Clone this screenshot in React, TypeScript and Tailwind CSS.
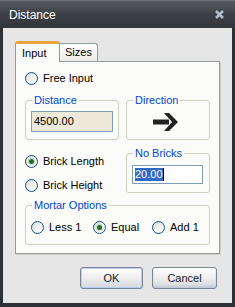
import React from "react";

function Radio({ checked, label }: { checked?: boolean; label: string }) {
    return (
        <label className="flex items-center gap-[5px] h-[13px]">
            <span className="w-[13px] h-[13px] shrink-0 rounded-full border border-[#1c5180] bg-gradient-to-br from-[#d8d8d2] via-[#f2f2ef] to-white flex items-center justify-center">
                {checked && <span className="w-[5px] h-[5px] rounded-full bg-[#22722a] shadow-[0_0_0_1px_#c3dcc3]" />}
            </span>
            <span className="leading-[13px]">{label}</span>
        </label>
    );
}

function Group({ title, className, children }: { title: string; className?: string; children?: React.ReactNode }) {
    return (
        <div className={"relative border border-[#d0d0bf] rounded-[3px] " + (className ?? "")}>
            <span className="absolute -top-[8px] left-[6px] px-[2px] bg-[#fbfbf9] text-[#0046d5] leading-[14px] whitespace-nowrap">
                {title}
            </span>
            {children}
        </div>
    );
}

export default function App() {
    return (
        <div className="w-[235px] h-[307px] flex flex-col bg-[#2e3136] font-['Liberation_Sans',Arial,sans-serif] text-[11px] text-black select-none">
            {/* Title bar */}
            <div className="h-[28px] shrink-0 flex items-center justify-between pl-[9px] pr-[11px] bg-gradient-to-b from-[#56595e] via-[#3c3f44] to-[#32353a] border-t border-[#6a6d72]">
                <span className="text-white text-[12px] leading-none">Distance</span>
                <svg width="9" height="9" viewBox="0 0 9 9">
                    <path d="M1 1L8 8M8 1L1 8" stroke="#b3bdc9" strokeWidth="2.6" />
                </svg>
            </div>

            <div className="flex-1 px-[3px] pb-[4px] flex">
                <div className="flex-1 bg-[#e6e6e6] pt-[13px] pl-[12px] flex flex-col">
                    {/* Tabs */}
                    <div className="flex items-end h-[20px] relative z-10">
                        <div className="w-[45px] h-[21px] -mb-[1px] bg-[#fbfbf9] border-x border-[#919b9c] rounded-t-[3px] border-t-[3px] border-t-[#e8a33d] flex items-center pl-[6px]">
                            Input
                        </div>
                        <div className="w-[38px] h-[18px] bg-gradient-to-b from-white to-[#ecebe6] border-t border-r border-[#919b9c] rounded-tr-[3px] flex items-center pl-[5px]">
                            Sizes
                        </div>
                    </div>

                    {/* Tab page */}
                    <div className="w-[205px] h-[193px] bg-[#fbfbf9] border border-[#919b9c] shadow-[1px_1px_0_#d0d0c8] pt-[10px] pl-[9px] flex flex-col">
                        <Radio label="Free Input" />

                        <div className="flex gap-[7px] mt-[15px]">
                            <Group title="Distance" className="w-[94px] h-[40px] pt-[10px] pl-[5px]">
                                <div className="w-[82px] h-[21px] bg-[#ece9d8] border border-[#7f9db9] flex items-center pl-[2px]">
                                    4500.00
                                </div>
                            </Group>
                            <Group title="Direction" className="w-[84px] h-[40px] flex items-center justify-center pr-[5px] pt-[3px]">
                                <svg width="25" height="18" viewBox="0 0 25 18">
                                    <path d="M0 6.5H16V11.5H0Z M11 0H16L25 9L16 18H11L19 9Z" fill="#222222" />
                                </svg>
                            </Group>
                        </div>

                        <div className="flex gap-[7px] mt-[13px]">
                            <div className="w-[94px] flex flex-col gap-[11px] pt-[2px]">
                                <Radio checked label="Brick Length" />
                                <Radio label="Brick Height" />
                            </div>
                            <Group title="No Bricks" className="w-[84px] h-[40px] pt-[11px] pl-[5px]">
                                <div className="w-[71px] h-[19px] bg-white border border-[#7f9db9] flex items-center pl-[2px]">
                                    <span className="bg-[#316ac5] text-white leading-[13px]">20.00</span>
                                    <span className="w-[1px] h-[13px] bg-black" />
                                </div>
                            </Group>
                        </div>

                        <Group title="Mortar Options" className="w-[185px] h-[40px] mt-[12px] pt-[15px] pl-[5px] flex items-start">
                            <div className="w-[62px]"><Radio label="Less 1" /></div>
                            <div className="w-[59px]"><Radio checked label="Equal" /></div>
                            <Radio label="Add 1" />
                        </Group>
                    </div>

                    {/* Buttons */}
                    <div className="flex justify-end gap-[9px] pr-[15px] mt-[13px]">
                        <button className="w-[63px] h-[22px] rounded-[3px] border border-[#7b8797] bg-gradient-to-b from-white via-[#eeeeee] to-[#d3d7de] shadow-[inset_0_0_0_1px_#b7d0ee] text-[11px] text-[#1a1a1a]">
                            OK
                        </button>
                        <button className="w-[65px] h-[22px] rounded-[3px] border border-[#7b8797] bg-gradient-to-b from-white via-[#eeeeee] to-[#d3d7de] shadow-[inset_0_-2px_2px_#c2cbd8] text-[11px] text-[#1a1a1a]">
                            Cancel
                        </button>
                    </div>
                </div>
            </div>
        </div>
    );
}
